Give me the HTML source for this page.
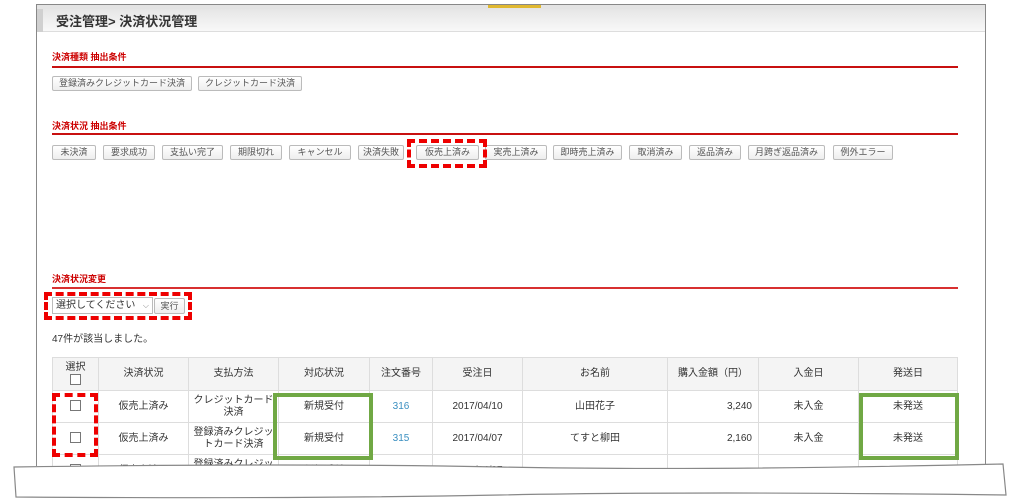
<!DOCTYPE html>
<html><head><meta charset="utf-8"><style>
*{margin:0;padding:0;box-sizing:border-box}
body{width:1017px;height:501px;background:#fff;position:relative;overflow:hidden;font-family:"Liberation Sans","Noto Sans CJK JP",sans-serif;color:#333}
.a{position:absolute}
.h{font-size:9px;font-weight:bold;color:#c00}
.rl{height:2px;background:#c81010}
.btn{position:absolute;height:15px;border:1px solid #bbb;border-radius:2px;background:linear-gradient(#fff,#eee);font-size:9px;color:#555;text-align:center;line-height:13px}
table{border-collapse:collapse;font-size:10px}
td,th{border:1px solid #ddd;text-align:center;font-weight:normal;padding:0;line-height:12px}
th{background:#f4f4f4;height:33px}
td{height:32px}
.cb{display:inline-block;width:11px;height:11px;border:1px solid #777;background:#fff;vertical-align:middle}
.lk{color:#3a8fc0}
</style></head><body>
<div class="a" style="left:36px;top:4px;width:950px;height:462px;border:1px solid #888;border-bottom:none"></div>
<div class="a" style="left:37px;top:5px;width:948px;height:4px;background:#e4e4e4"></div>
<div class="a" style="left:488px;top:5px;width:53px;height:3px;background:#e0b830"></div>
<div class="a" style="left:37px;top:9px;width:948px;height:23px;background:linear-gradient(#e6e6e6,#f8f8f8);border-bottom:1px solid #ddd"></div>
<div class="a" style="left:37px;top:9px;width:6px;height:23px;background:#d0d0d0"></div>
<div class="a" style="left:56px;top:11px;font-size:13px;font-weight:bold;color:#333">受注管理&gt; 決済状況管理</div>

<div class="a h" style="left:52px;top:50px">決済種類 抽出条件</div>
<div class="a rl" style="left:52px;top:66px;width:906px"></div>
<div class="btn" style="left:52px;top:76px;width:140px">登録済みクレジットカード決済</div>
<div class="btn" style="left:198px;top:76px;width:104px">クレジットカード決済</div>

<div class="a h" style="left:52px;top:119px">決済状況 抽出条件</div>
<div class="a rl" style="left:52px;top:133px;width:906px"></div>
<div class="btn" style="left:52px;top:145px;width:44px">未決済</div>
<div class="btn" style="left:103px;top:145px;width:52px">要求成功</div>
<div class="btn" style="left:162px;top:145px;width:61px">支払い完了</div>
<div class="btn" style="left:230px;top:145px;width:52px">期限切れ</div>
<div class="btn" style="left:289px;top:145px;width:62px">キャンセル</div>
<div class="btn" style="left:358px;top:145px;width:46px">決済失敗</div>
<div class="btn" style="left:416px;top:145px;width:63px">仮売上済み</div>
<div class="btn" style="left:485px;top:145px;width:62px">実売上済み</div>
<div class="btn" style="left:553px;top:145px;width:69px">即時売上済み</div>
<div class="btn" style="left:629px;top:145px;width:53px">取消済み</div>
<div class="btn" style="left:689px;top:145px;width:52px">返品済み</div>
<div class="btn" style="left:748px;top:145px;width:77px">月跨ぎ返品済み</div>
<div class="btn" style="left:833px;top:145px;width:60px">例外エラー</div>
<div class="a" style="left:407px;top:139px;width:80px;height:29px;border:4px dashed #e00"></div>

<div class="a h" style="left:52px;top:272px">決済状況変更</div>
<div class="a" style="left:52px;top:287px;width:906px;height:2px;background:#d83030"></div>
<div class="a" style="left:52px;top:297px;width:101px;height:17px;border:1px solid #bbb;font-size:10px;line-height:15px;padding-left:3px;background:#fff">選択してください <span style="float:right;margin-right:3px;color:#888;font-size:8px">⌵</span></div>
<div class="btn" style="left:154px;top:298px;width:31px;height:16px;line-height:14px">実行</div>
<div class="a" style="left:44px;top:292px;width:148px;height:28px;border:4px dashed #e00"></div>
<div class="a" style="left:52px;top:330px;font-size:10px">47件が該当しました。</div>

<table class="a" style="left:52px;top:357px;width:906px">
<tr><th style="width:46px">選択<br><span class="cb"></span></th><th style="width:90px">決済状況</th><th style="width:90px">支払方法</th><th style="width:91px">対応状況</th><th style="width:63px">注文番号</th><th style="width:90px">受注日</th><th style="width:145px">お名前</th><th style="width:91px">購入金額（円）</th><th style="width:100px">入金日</th><th>発送日</th></tr>
<tr><td><span class="cb"></span></td><td>仮売上済み</td><td>クレジットカード<br>決済</td><td>新規受付</td><td class="lk">316</td><td>2017/04/10</td><td>山田花子</td><td style="text-align:right;padding-right:6px">3,240</td><td>未入金</td><td>未発送</td></tr>
<tr><td><span class="cb"></span></td><td>仮売上済み</td><td>登録済みクレジッ<br>トカード決済</td><td>新規受付</td><td class="lk">315</td><td>2017/04/07</td><td>てすと柳田</td><td style="text-align:right;padding-right:6px">2,160</td><td>未入金</td><td>未発送</td></tr>
<tr><td><span class="cb"></span></td><td>仮売上済み</td><td>登録済みクレジッ<br>トカード決済</td><td>新規受付</td><td class="lk">314</td><td>2017/04/07</td><td></td><td></td><td></td><td></td></tr>
</table>
<div class="a" style="left:52px;top:393px;width:46px;height:64px;border:4px dashed #e00"></div>
<div class="a" style="left:273px;top:393px;width:100px;height:67px;border:4px solid #70a844"></div>
<div class="a" style="left:859px;top:393px;width:100px;height:67px;border:4px solid #70a844"></div>

<svg class="a" style="left:0;top:455px" width="1017" height="46">
<rect x="0" y="20" width="1017" height="26" fill="#fff"/>
<path d="M14 12 Q300 8 500 12 Q700 16 1003 9 L1006 40 Q700 36 500 40 Q300 44 16 42 Z" fill="#fff" stroke="#888" stroke-width="1.2"/>
</svg>
</body></html>
